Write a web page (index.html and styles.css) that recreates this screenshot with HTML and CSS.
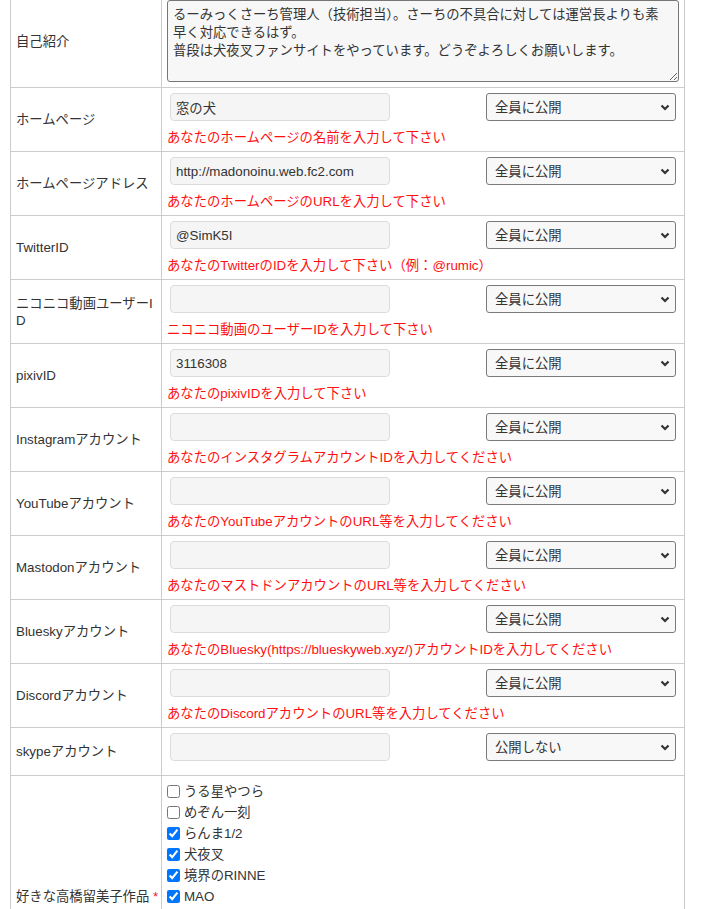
FILE: index.html
```html
<!DOCTYPE html>
<html lang="ja">
  <head>
    <meta charset="UTF-8" />
    <meta name="viewport" content="width=device-width, initial-scale=1.0" />
    <title>プロフィール編集</title>
    <link rel="stylesheet" href="styles.css">
  </head>
  <body>
    <div class="container">
      <table class="profile-table">
        <tr>
          <th>自己紹介</th>
          <td>
            <textarea class="intro">るーみっくさーち管理人（技術担当）。さーちの不具合に対しては運営長よりも素早く対応できるはず。
普段は犬夜叉ファンサイトをやっています。どうぞよろしくお願いします。</textarea>
          </td>
        </tr>
        <tr>
          <th>ホームページ</th>
          <td>
            <div class="controls">
              <input type="text" class="text-input" value="窓の犬" />
              <span class="select-wrap">
                <select><option>全員に公開</option><option>公開しない</option></select>
                <svg class="chevron" width="10" height="7" viewBox="0 0 10 7"><path d="M1.5 1.5 5 5l3.5-3.5" fill="none" stroke="#333" stroke-width="2.2"/></svg>
              </span>
            </div>
            <p class="hint">あなたのホームページの名前を入力して下さい</p>
          </td>
        </tr>
        <tr>
          <th>ホームページアドレス</th>
          <td>
            <div class="controls">
              <input type="text" class="text-input" value="http://madonoinu.web.fc2.com" />
              <span class="select-wrap">
                <select><option>全員に公開</option><option>公開しない</option></select>
                <svg class="chevron" width="10" height="7" viewBox="0 0 10 7"><path d="M1.5 1.5 5 5l3.5-3.5" fill="none" stroke="#333" stroke-width="2.2"/></svg>
              </span>
            </div>
            <p class="hint">あなたのホームページのURLを入力して下さい</p>
          </td>
        </tr>
        <tr>
          <th>TwitterID</th>
          <td>
            <div class="controls">
              <input type="text" class="text-input" value="@SimK5I" />
              <span class="select-wrap">
                <select><option>全員に公開</option><option>公開しない</option></select>
                <svg class="chevron" width="10" height="7" viewBox="0 0 10 7"><path d="M1.5 1.5 5 5l3.5-3.5" fill="none" stroke="#333" stroke-width="2.2"/></svg>
              </span>
            </div>
            <p class="hint">あなたのTwitterのIDを入力して下さい（例：@rumic）</p>
          </td>
        </tr>
        <tr>
          <th class="break">ニコニコ動画ユーザーID</th>
          <td>
            <div class="controls">
              <input type="text" class="text-input" value="" />
              <span class="select-wrap">
                <select><option>全員に公開</option><option>公開しない</option></select>
                <svg class="chevron" width="10" height="7" viewBox="0 0 10 7"><path d="M1.5 1.5 5 5l3.5-3.5" fill="none" stroke="#333" stroke-width="2.2"/></svg>
              </span>
            </div>
            <p class="hint">ニコニコ動画のユーザーIDを入力して下さい</p>
          </td>
        </tr>
        <tr>
          <th>pixivID</th>
          <td>
            <div class="controls">
              <input type="text" class="text-input" value="3116308" />
              <span class="select-wrap">
                <select><option>全員に公開</option><option>公開しない</option></select>
                <svg class="chevron" width="10" height="7" viewBox="0 0 10 7"><path d="M1.5 1.5 5 5l3.5-3.5" fill="none" stroke="#333" stroke-width="2.2"/></svg>
              </span>
            </div>
            <p class="hint">あなたのpixivIDを入力して下さい</p>
          </td>
        </tr>
        <tr>
          <th>Instagramアカウント</th>
          <td>
            <div class="controls">
              <input type="text" class="text-input" value="" />
              <span class="select-wrap">
                <select><option>全員に公開</option><option>公開しない</option></select>
                <svg class="chevron" width="10" height="7" viewBox="0 0 10 7"><path d="M1.5 1.5 5 5l3.5-3.5" fill="none" stroke="#333" stroke-width="2.2"/></svg>
              </span>
            </div>
            <p class="hint">あなたのインスタグラムアカウントIDを入力してください</p>
          </td>
        </tr>
        <tr>
          <th>YouTubeアカウント</th>
          <td>
            <div class="controls">
              <input type="text" class="text-input" value="" />
              <span class="select-wrap">
                <select><option>全員に公開</option><option>公開しない</option></select>
                <svg class="chevron" width="10" height="7" viewBox="0 0 10 7"><path d="M1.5 1.5 5 5l3.5-3.5" fill="none" stroke="#333" stroke-width="2.2"/></svg>
              </span>
            </div>
            <p class="hint">あなたのYouTubeアカウントのURL等を入力してください</p>
          </td>
        </tr>
        <tr>
          <th>Mastodonアカウント</th>
          <td>
            <div class="controls">
              <input type="text" class="text-input" value="" />
              <span class="select-wrap">
                <select><option>全員に公開</option><option>公開しない</option></select>
                <svg class="chevron" width="10" height="7" viewBox="0 0 10 7"><path d="M1.5 1.5 5 5l3.5-3.5" fill="none" stroke="#333" stroke-width="2.2"/></svg>
              </span>
            </div>
            <p class="hint">あなたのマストドンアカウントのURL等を入力してください</p>
          </td>
        </tr>
        <tr>
          <th>Blueskyアカウント</th>
          <td>
            <div class="controls">
              <input type="text" class="text-input" value="" />
              <span class="select-wrap">
                <select><option>全員に公開</option><option>公開しない</option></select>
                <svg class="chevron" width="10" height="7" viewBox="0 0 10 7"><path d="M1.5 1.5 5 5l3.5-3.5" fill="none" stroke="#333" stroke-width="2.2"/></svg>
              </span>
            </div>
            <p class="hint">あなたのBluesky(https://blueskyweb.xyz/)アカウントIDを入力してください</p>
          </td>
        </tr>
        <tr>
          <th>Discordアカウント</th>
          <td>
            <div class="controls">
              <input type="text" class="text-input" value="" />
              <span class="select-wrap">
                <select><option>全員に公開</option><option>公開しない</option></select>
                <svg class="chevron" width="10" height="7" viewBox="0 0 10 7"><path d="M1.5 1.5 5 5l3.5-3.5" fill="none" stroke="#333" stroke-width="2.2"/></svg>
              </span>
            </div>
            <p class="hint">あなたのDiscordアカウントのURL等を入力してください</p>
          </td>
        </tr>
        <tr>
          <th>skypeアカウント</th>
          <td>
            <div class="controls">
              <input type="text" class="text-input" value="" />
              <span class="select-wrap">
                <select><option>公開しない</option><option>全員に公開</option></select>
                <svg class="chevron" width="10" height="7" viewBox="0 0 10 7"><path d="M1.5 1.5 5 5l3.5-3.5" fill="none" stroke="#333" stroke-width="2.2"/></svg>
              </span>
            </div>
          </td>
        </tr>
        <tr>
          <th class="nowrap">好きな高橋留美子作品 <span class="required">*</span></th>
          <td>
            <ul class="works">
              <li><label><input type="checkbox" /> うる星やつら</label></li>
              <li><label><input type="checkbox" /> めぞん一刻</label></li>
              <li><label><input type="checkbox" checked /> らんま1/2</label></li>
              <li><label><input type="checkbox" checked /> 犬夜叉</label></li>
              <li><label><input type="checkbox" checked /> 境界のRINNE</label></li>
              <li><label><input type="checkbox" checked /> MAO</label></li>
              <li><label><input type="checkbox" /> 人魚シリーズ</label></li>
              <li><label><input type="checkbox" /> 1ポンドの福音</label></li>
              <li><label><input type="checkbox" /> 炎トリッパー</label></li>
              <li><label><input type="checkbox" /> 高橋留美子劇場</label></li>
              <li><label><input type="checkbox" /> その他</label></li>
            </ul>
          </td>
        </tr>
      </table>
    </div>
  </body>
</html>
```

FILE: styles.css
```css
body {
  font-family: "Liberation Sans", "Noto Sans CJK JP", sans-serif;
  font-size: 13.33px;
  color: #333;
  background: #fff;
  margin: 0;
}
.container {
  margin-top: -6px;
  padding-left: 10px;
}
.profile-table {
  border-collapse: collapse;
  table-layout: fixed;
  width: 675px;
}
.profile-table th,
.profile-table td {
  border: 1px solid #ccc;
  padding: 5px;
  line-height: 17px;
}
.profile-table th {
  width: 140px;
  font-weight: normal;
  text-align: left;
  vertical-align: middle;
}
.profile-table th.break {
  word-break: break-all;
}
.profile-table th.nowrap {
  white-space: nowrap;
  overflow: visible;
}
.profile-table td {
  vertical-align: top;
}
.intro {
  display: block;
  box-sizing: border-box;
  width: 100%;
  height: 82px;
  margin: 0;
  padding: 5px 14px 5px 5px;
  font-family: inherit;
  font-size: 13.33px;
  line-height: 18px;
  color: #333;
  background: #f7f7f7;
  border: 1px solid #767676;
  border-radius: 3px;
}
.controls {
  display: flex;
  justify-content: space-between;
  align-items: center;
  padding: 0 3px;
  margin-bottom: 9px;
}
.text-input {
  box-sizing: border-box;
  width: 220px;
  height: 28px;
  margin: 0;
  padding: 0 5px;
  font-family: inherit;
  font-size: 13.33px;
  color: #333;
  background: #f5f5f5;
  border: 1px solid #dcdcdc;
  border-radius: 4px;
}
.select-wrap {
  position: relative;
  display: block;
}
.select-wrap select {
  display: block;
  box-sizing: border-box;
  width: 190px;
  height: 28px;
  margin: 0;
  padding: 0 24px 0 8px;
  font-family: inherit;
  font-size: 13.33px;
  color: #333;
  background: #f8f8f8;
  border: 1px solid #7a7a7a;
  border-radius: 3px;
  appearance: none;
  -webkit-appearance: none;
}
.chevron {
  position: absolute;
  right: 6px;
  top: 11px;
  pointer-events: none;
}
.hint {
  margin: 0;
  line-height: 16px;
  color: #ff1010;
}
.required {
  color: #e8173a;
}
.works {
  list-style: none;
  margin: 0;
  padding: 0;
}
.works li {
  height: 21px;
  line-height: 21px;
}
.works label {
  display: flex;
  align-items: center;
}
.works input {
  width: 13px;
  height: 13px;
  margin: 0 4px 0 0;
}
```
